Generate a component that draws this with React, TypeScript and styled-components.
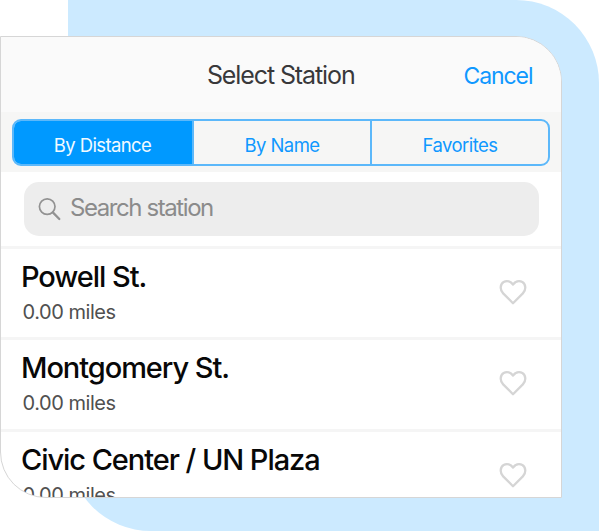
import React from "react";
import styled, { createGlobalStyle } from "styled-components";

const GlobalStyle = createGlobalStyle`
  *, *::before, *::after { box-sizing: border-box; }
  body { margin: 0; background: #fff; font-family: Inter, "Liberation Sans", sans-serif; }
  button { font: inherit; border: 0; padding: 0; background: none; }
`;

const Stage = styled.main`
  width: 599px;
  height: 531px;
  overflow: hidden;
  display: grid;
  background: #fff;
`;

const Backdrop = styled.div`
  grid-area: 1 / 1;
  margin-left: 67.5px;
  border-radius: 0 83px 0 83px;
  background: #cceaff;
`;

const Card = styled.section`
  grid-area: 1 / 1;
  display: flex;
  flex-direction: column;
  width: 562px;
  height: 462px;
  margin-top: 36px;
  overflow: hidden;
  background: #fff;
  border: 1px solid #d6d6d6;
  border-radius: 0 46px 0 46px;
`;

const Header = styled.header`
  flex: none;
  display: grid;
  grid-template-columns: 1fr auto 1fr;
  align-items: center;
  height: 75px;
  padding: 1px 28.5px 0 28px;
  background: #fafafa;
`;

const Title = styled.h1`
  grid-column: 2;
  margin: 0;
  font-size: 25px;
  font-weight: 400;
  line-height: 30px;
  letter-spacing: -1.1px;
  color: #38383a;
  white-space: nowrap;
`;

const Cancel = styled.button`
  justify-self: end;
  padding-top: 1px;
  font-size: 23px;
  line-height: 30px;
  letter-spacing: -1.05px;
  color: #0f98ff;
`;

const TabBar = styled.div`
  flex: none;
  height: 60px;
  padding: 7px 11px 6px;
  background: #f6f6f5;
`;

const Segments = styled.div`
  display: grid;
  grid-template-columns: 178px 178px 1fr;
  height: 47px;
  overflow: hidden;
  border: 2px solid #5cb8fa;
  border-radius: 9px;
`;

const Segment = styled.button<{ $active?: boolean }>`
  margin: ${(p) => (p.$active ? "-1px 0 -1px -1px" : "0")};
  padding-top: 4px;
  background: ${(p) => (p.$active ? "#0099ff" : "transparent")};
  color: ${(p) => (p.$active ? "#f2faff" : "#0f98ff")};
  font-size: 18.5px;
  letter-spacing: ${(p) => (p.$active ? "-0.62px" : "-0.55px")};

  & + & { border-left: 2px solid #5cb8fa; }
`;

const SearchArea = styled.div`
  flex: none;
  height: 76.5px;
  padding: 10px 22.5px 0 23px;
  border-bottom: 3px solid #f5f5f5;
`;

const SearchBox = styled.div`
  display: flex;
  align-items: center;
  gap: 8px;
  height: 54px;
  padding: 0 14px 4px;
  border-radius: 15px;
  background: #ededed;
  color: #8b8b8b;
  font-size: 24px;
  letter-spacing: -1.42px;

  svg { margin-top: 3px; }
`;

const Station = styled.div`
  flex: none;
  display: flex;
  justify-content: space-between;
  height: 91.5px;
  padding: 9.4px 34px 0 20px;
  border-bottom: 3px solid #f5f5f5;

  svg { margin-top: 21px; }
`;

const Name = styled.div`
  font-size: 29px;
  font-weight: 500;
  line-height: 38px;
  letter-spacing: -1.06px;
  color: #080808;
`;

const Distance = styled.div`
  margin-top: 1px;
  padding-left: 1.5px;
  font-size: 20px;
  line-height: 30px;
  letter-spacing: -0.45px;
  color: #505050;
`;

const SearchIcon = () => (
  <svg width="24" height="26" viewBox="0 0 24 26" fill="none" stroke="#929292">
    <circle cx="9.2" cy="10.6" r="7.8" strokeWidth="1.7" />
    <path d="M14.8 16.4L21.3 23" strokeWidth="2.3" strokeLinecap="round" />
  </svg>
);

const HeartIcon = () => (
  <svg width="28" height="27" viewBox="0 0 29 27" fill="none" stroke="#d5d5d5" strokeWidth="2.4" strokeLinejoin="round">
    <path d="M14.5 24.6L4.3 14.4C.6 10.7 1.2 4.8 4.8 2.7C8.3.7 12.2 2.2 14.5 5.2C16.8 2.2 20.7.7 24.2 2.7C27.8 4.8 28.4 10.7 24.7 14.4Z" />
  </svg>
);

const stations = [
  { name: "Powell St.", distance: "0.00 miles" },
  { name: "Montgomery St.", distance: "0.00 miles" },
  { name: "Civic Center / UN Plaza", distance: "0.00 miles" },
];

export default function App() {
  return (
    <>
      <GlobalStyle />
      <Stage>
        <Backdrop />
        <Card>
          <Header>
            <Title>Select Station</Title>
            <Cancel>Cancel</Cancel>
          </Header>
          <TabBar>
            <Segments>
              <Segment $active>By Distance</Segment>
              <Segment>By Name</Segment>
              <Segment>Favorites</Segment>
            </Segments>
          </TabBar>
          <SearchArea>
            <SearchBox>
              <SearchIcon />
              <span>Search station</span>
            </SearchBox>
          </SearchArea>
          {stations.map((station) => (
            <Station key={station.name}>
              <div>
                <Name>{station.name}</Name>
                <Distance>{station.distance}</Distance>
              </div>
              <HeartIcon />
            </Station>
          ))}
        </Card>
      </Stage>
    </>
  );
}
